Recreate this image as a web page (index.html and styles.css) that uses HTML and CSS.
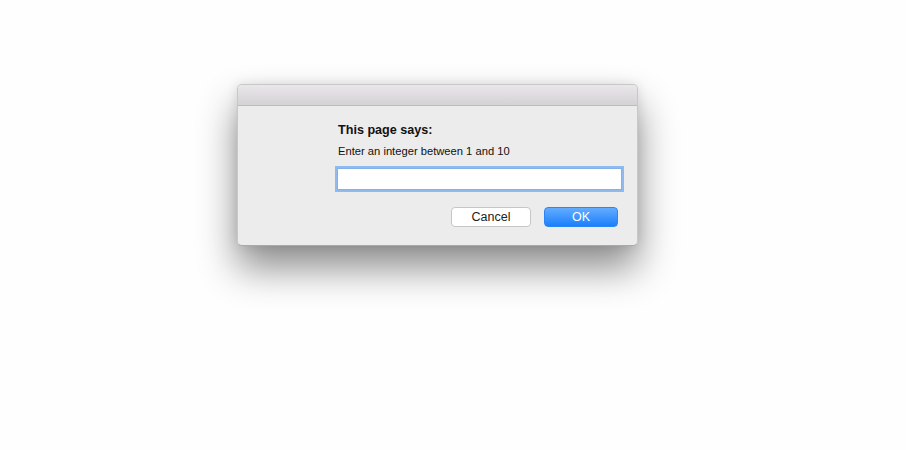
FILE: index.html
```html
<!DOCTYPE html>
<html>
<head>
<meta charset="utf-8">
<link rel="stylesheet" href="styles.css">
</head>
<body>
<div class="page">
  <div class="dialog">
    <div class="titlebar"></div>
    <div class="content">
      <div class="heading">This page says:</div>
      <div class="message">Enter an integer between 1 and 10</div>
      <div class="field"><input class="input" type="text"></div>
      <div class="buttons">
        <button class="btn cancel">Cancel</button>
        <button class="btn ok">OK</button>
      </div>
    </div>
  </div>
</div>
</body>
</html>
```
FILE: styles.css
```css
html, body {
  margin: 0;
  background: #fefefe;
}
.page {
  width: 906px;
  height: 450px;
  padding: 84px 0 0 237px;
  box-sizing: border-box;
  font-family: "Liberation Sans", Arial, sans-serif;
}
.dialog {
  width: 401px;
  height: 162px;
  box-sizing: border-box;
  background: #ececec;
  border: 1px solid #c9c7c9;
  border-bottom-color: #a9a9a9;
  border-radius: 5px;
  overflow: hidden;
  box-shadow: 0 22px 38px rgba(0,0,0,0.45), 0 0 12px rgba(0,0,0,0.1);
  display: flex;
  flex-direction: column;
}
.titlebar {
  height: 20px;
  flex: none;
  background: linear-gradient(#e9e7e9, #d4d2d4);
  border-bottom: 1px solid #bebcbe;
}
.content {
  padding: 16px 15px 0 100px;
}
.heading {
  font-size: 12.6px;
  font-weight: bold;
  color: #111;
  line-height: 16px;
}
.message {
  font-size: 11.2px;
  color: #111;
  line-height: 14px;
  margin-top: 6px;
}
.field {
  margin-top: 10px;
  margin-left: -1px;
}
.input {
  display: block;
  width: 285px;
  height: 22px;
  box-sizing: border-box;
  margin: 0;
  border: 1px solid #84b1ea;
  box-shadow: 0 0 0 2px #8fbaef;
  background: #fff;
  outline: none;
}
.buttons {
  display: flex;
  justify-content: flex-end;
  gap: 13px;
  margin-top: 17px;
  padding-right: 4px;
}
.btn {
  height: 20px;
  box-sizing: border-box;
  border-radius: 4px;
  font-family: "Liberation Sans", Arial, sans-serif;
  font-size: 12.5px;
  padding: 0;
  line-height: 18px;
}
.cancel {
  width: 80px;
  background: #fff;
  border: 1px solid #c6c6c6;
  color: #222;
}
.ok {
  width: 74px;
  background: linear-gradient(#63acff, #1b80fa);
  border: 1px solid #2a86f5;
  color: #fff;
}
```
